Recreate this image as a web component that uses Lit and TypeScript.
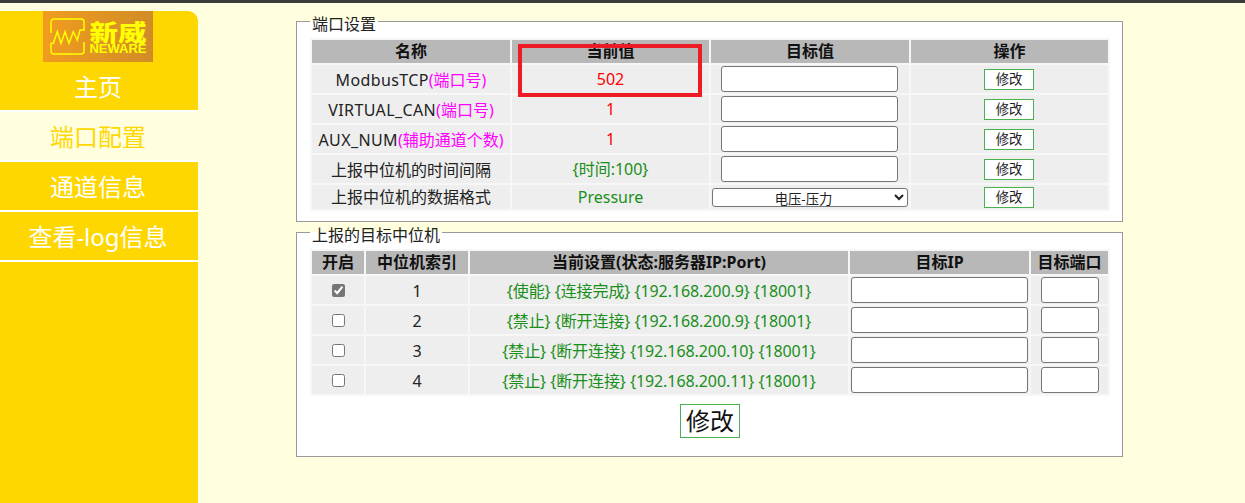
import { LitElement, html, css } from "lit";
import { customElement } from "lit/decorators.js";

@customElement("app-root")
export class AppRoot extends LitElement {
  static styles = css`
    :host {
      display: flex;
      flex-direction: column;
      height: 100vh;
      overflow: hidden;
      background: #ffffe0;
      font-family: "Noto Sans", "Noto Sans CJK SC", sans-serif;
      font-size: 16px;
      color: #222;
      position: relative;
    }
    .topbar { height: 3px; background: #3c3c3c; flex: none; }
    .body { display: flex; flex: 1; min-height: 0; }
    .side {
      width: 198px;
      flex: none;
      margin-top: 8px;
      background: #ffd700;
      border-top-right-radius: 10px;
      display: flex;
      flex-direction: column;
    }
    .logo {
      width: 110px;
      height: 51px;
      margin-left: 43px;
      flex: none;
      box-sizing: border-box;
      padding-left: 7px;
      display: flex;
      align-items: center;
      gap: 3px;
      background: linear-gradient(90deg, #f09c1f, #d18c26);
      color: #ffff00;
    }
    .logo svg { width: 36px; height: 37px; flex: none; }
    .brand { display: flex; flex-direction: column; align-items: center; width: 58px; }
    .brand-cn {
      font-family: "Noto Sans CJK SC", sans-serif;
      font-size: 23px;
      font-weight: 900;
      line-height: 24px;
      height: 24px;
      transform: scaleX(1.24);
    }
    .brand-en {
      font-family: "Liberation Sans", sans-serif;
      font-size: 13px;
      font-weight: 700;
      line-height: 11px;
    }
    .nav { display: flex; flex-direction: column; }
    .nav div {
      box-sizing: content-box;
      height: 47px;
      padding: 1px 2px 0 0;
      line-height: 47px;
      text-align: center;
      font-size: 24px;
      color: #fff;
      border-bottom: 2px solid #fff;
    }
    .nav .active { background: #ffffe0; color: #ffd700; }
    .main {
      margin-left: 98px;
      width: 827px;
      flex: none;
      display: flex;
      flex-direction: column;
      padding-top: 8px;
    }
    fieldset {
      margin: 0;
      box-sizing: border-box;
      width: 827px;
      min-width: 0;
      background: #fff;
      border: 1px solid #999;
      padding: 6px 12px 0 13px;
    }
    .f1 { height: 211px; }
    .f2 { height: 235px; }
    legend {
      box-sizing: border-box;
      padding: 5px 2px 0;
      margin: 0;
      font-size: 16px;
      line-height: 16px;
      height: 21px;
      color: #222;
    }
    table {
      width: 800px;
      table-layout: fixed;
      border-collapse: separate;
      border-spacing: 2px;
      background: #f7f7f7;
    }
    th {
      background: #b8b8b8;
      height: 23px;
      padding: 0;
      font-size: 16px;
      line-height: 23px;
      font-weight: 700;
      color: #111;
      text-align: center;
      white-space: nowrap;
    }
    td {
      background: #eee;
      height: 28px;
      padding: 0;
      text-align: center;
      line-height: 20px;
      white-space: nowrap;
      color: #222;
    }
    tr.short td { height: 24px; }
    td.txt { padding-top: 1px; height: 27px; }
    td.ctl { padding-right: 1px; }
    .lat { letter-spacing: 0.38px; }
    .mag { color: #ff00ff; letter-spacing: 0; }
    .red { color: #ff0000; }
    .grn { color: #1a8f1a; }
    .tight { letter-spacing: -0.08px; }
    .c1 { width: 198px; } .c2 { width: 197px; } .c3 { width: 198px; } .c4 { width: 197px; }
    .d1 { width: 52px; } .d2 { width: 102px; } .d3 { width: 378px; } .d4 { width: 179px; } .d5 { width: 77px; }
    input[type="text"] {
      box-sizing: border-box;
      display: block;
      height: 26px;
      margin: 1px auto;
      padding: 0;
      border: 1px solid #767676;
      border-radius: 3px;
      background: #fff;
    }
    .w177 { width: 177px; }
    .w58 { width: 58px; }
    input[type="checkbox"] {
      width: 13px;
      height: 13px;
      margin: 0 auto;
      display: block;
      accent-color: #767676;
    }
    select {
      display: block;
      box-sizing: border-box;
      width: 196px;
      height: 19px;
      margin: 0 auto;
      padding: 0;
      font-family: "Noto Sans", "Noto Sans CJK SC", sans-serif;
      font-size: 13.33px;
      line-height: 17px;
      text-align: center;
      text-align-last: center;
      background: #fff;
      color: #222;
      border: 1px solid #767676;
      border-radius: 3px;
    }
    button {
      box-sizing: border-box;
      font-family: "Noto Sans", "Noto Sans CJK SC", sans-serif;
      background: #fff;
      border: 1px solid #4caf50;
      color: #222;
      padding: 0;
    }
    .small { display: block; margin: 1px auto 0; width: 50px; height: 21px; font-size: 13.33px; line-height: 19px; }
    .big { display: block; margin: 8px auto 0; width: 60px; height: 34px; font-size: 24px; line-height: 32px; color: #111; }
    .mark {
      position: absolute;
      left: 518px;
      top: 44px;
      width: 184px;
      height: 53px;
      box-sizing: border-box;
      border: 4px solid #ed1c24;
      pointer-events: none;
    }
  `;

  private portRow(label: string, note: string, value: string, cls: string) {
    return html`<tr>
      <td class="txt ${note ? "lat" : ""}">${label}${note ? html`<span class="mag">${note}</span>` : ""}</td>
      <td class=${cls}>${value}</td>
      <td class="ctl"><input type="text" class="w177" /></td>
      <td class="ctl"><button class="small">修改</button></td>
    </tr>`;
  }

  private hostRow(n: number, on: boolean, text: string) {
    return html`<tr>
      <td><input type="checkbox" .checked=${on} /></td>
      <td class="txt">${n}</td>
      <td class="txt grn tight">${text}</td>
      <td><input type="text" class="w177" /></td>
      <td><input type="text" class="w58" /></td>
    </tr>`;
  }

  render() {
    return html`
      <div class="topbar"></div>
      <div class="body">
        <aside class="side">
          <div class="logo">
            <svg viewBox="0 0 36 37" fill="none" stroke="#ffff00" stroke-width="1.5">
              <path d="M1 15V4a3 3 0 0 1 3-3h27a3 3 0 0 1 3 3v8" />
              <path d="M34 24v9a3 3 0 0 1-3 3H4a3 3 0 0 1-3-3v-8" />
              <path d="M1 25.3h2.3l4-11.6 3.7 11.6 4-11.6 4 11.6 4.3-11.6 4 8.3 2.7-10H35" />
            </svg>
            <div class="brand">
              <span class="brand-cn">新威</span>
              <span class="brand-en">NEWARE</span>
            </div>
          </div>
          <nav class="nav">
            <div>主页</div>
            <div class="active">端口配置</div>
            <div>通道信息</div>
            <div>查看-log信息</div>
          </nav>
        </aside>
        <main class="main">
          <fieldset class="f1">
            <legend>端口设置</legend>
            <table>
              <colgroup><col class="c1" /><col class="c2" /><col class="c3" /><col class="c4" /></colgroup>
              <tr><th>名称</th><th>当前值</th><th>目标值</th><th>操作</th></tr>
              ${this.portRow("ModbusTCP", "(端口号)", "502", "red")}
              ${this.portRow("VIRTUAL_CAN", "(端口号)", "1", "red")}
              ${this.portRow("AUX_NUM", "(辅助通道个数)", "1", "red")}
              ${this.portRow("上报中位机的时间间隔", "", "{时间:100}", "grn")}
              <tr class="short">
                <td>上报中位机的数据格式</td>
                <td class="grn">Pressure</td>
                <td class="ctl"><select><option>电压-压力</option></select></td>
                <td class="ctl"><button class="small">修改</button></td>
              </tr>
            </table>
          </fieldset>
          <fieldset class="f2">
            <legend>上报的目标中位机</legend>
            <table>
              <colgroup><col class="d1" /><col class="d2" /><col class="d3" /><col class="d4" /><col class="d5" /></colgroup>
              <tr><th>开启</th><th>中位机索引</th><th>当前设置(状态:服务器IP:Port)</th><th>目标IP</th><th>目标端口</th></tr>
              ${this.hostRow(1, true, "{使能} {连接完成} {192.168.200.9} {18001}")}
              ${this.hostRow(2, false, "{禁止} {断开连接} {192.168.200.9} {18001}")}
              ${this.hostRow(3, false, "{禁止} {断开连接} {192.168.200.10} {18001}")}
              ${this.hostRow(4, false, "{禁止} {断开连接} {192.168.200.11} {18001}")}
            </table>
            <button class="big">修改</button>
          </fieldset>
        </main>
      </div>
      <div class="mark"></div>
    `;
  }
}
